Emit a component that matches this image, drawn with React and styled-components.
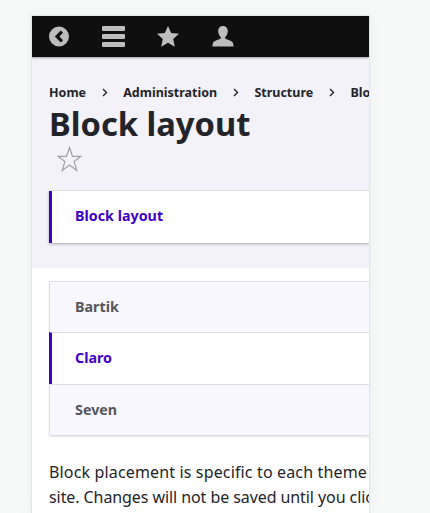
import React from 'react'
import styled, { createGlobalStyle } from 'styled-components'

const GlobalStyle = createGlobalStyle`
  html, body {
    margin: 0;
    height: 513px;
    overflow: hidden;
    background: #f8f9f9;
    font-family: "Noto Sans", "Open Sans", sans-serif;
  }
`

const Frame = styled.div`
  width: 337px;
  height: 497px;
  margin: 16px 0 0 32px;
  background: #fff;
  overflow: hidden;
  box-shadow: 0 0 1px 1px #e4e5e6, 0 0 16px rgba(0, 0, 0, 0.06);
`

const Toolbar = styled.div`
  height: 41px;
  display: flex;
  align-items: center;
  background: #0f0f0f;
  box-shadow: 0 1px 2px rgba(0, 0, 0, 0.35);
  position: relative;
  padding-left: 17px;
  gap: 32.5px;
`

const ToolIcon = styled.svg`
  width: ${p => p.$w}px;
  height: 21px;
  fill: #bdbdbd;
  flex: none;
`

const Header = styled.header`
  height: 211px;
  box-sizing: border-box;
  padding: 26px 0 0 17px;
  background: #f3f2f9;
`

const Crumbs = styled.nav`
  display: flex;
  align-items: center;
  height: 18px;
  white-space: nowrap;
  font-size: 12.5px;
  font-weight: 700;
  color: #232429;
`

const Chevron = styled.svg`
  width: 6px;
  height: 9px;
  margin: 0 15.6px;
  flex: none;
  fill: none;
  stroke: #232429;
  stroke-width: 1.4;
`

const Title = styled.h1`
  margin: 3px 0 0;
  font-size: 32.7px;
  line-height: 40px;
  font-weight: 700;
  color: #232429;
`

const FavStar = styled.svg`
  display: block;
  width: 25px;
  height: 26px;
  margin: 2px 0 0 8px;
  fill: none;
  stroke: #a0a0a8;
  stroke-width: 1.2;
`

const PrimaryTab = styled.div`
  margin-top: 19px;
  height: 52px;
  display: flex;
  align-items: center;
  box-sizing: border-box;
  padding: 0 0 3px 23px;
  background: #fff;
  border-left: 3px solid #3f00c8;
  box-shadow: 0 1px 3px rgba(0, 0, 0, 0.28), 0 0 1px rgba(0, 0, 0, 0.2);
  font-size: 14.3px;
  font-weight: 700;
  color: #3f00c8;
`

const Content = styled.main`
  padding: 13px 0 0 17px;
`

const TabList = styled.div`
  border: 1px solid #dedde5;
  border-right: none;
  border-radius: 2px 0 0 2px;
  box-shadow: 0 1px 2px rgba(0, 0, 0, 0.1);
`

const TabRow = styled.div`
  height: ${p => (p.$active ? '52px' : '51px')};
  display: flex;
  align-items: center;
  box-sizing: border-box;
  padding: 0 0 2px ${p => (p.$active ? '23px' : '25px')};
  font-size: 14.3px;
  font-weight: 700;
  background: ${p => (p.$active ? '#fff' : '#f9f8fe')};
  color: ${p => (p.$active ? '#3f00c8' : '#55565b')};
  border-left: ${p => (p.$active ? '3px solid #3f00c8' : 'none')};
  margin-left: ${p => (p.$active ? '-1px' : '0')};
  &:first-child {
    height: 50px;
  }
  & + & {
    border-top: 1px solid #dedde5;
  }
`

const Intro = styled.p`
  margin: 24px 0 0;
  width: 340px;
  font-size: 16px;
  line-height: 25px;
  color: #232429;
  white-space: nowrap;
`

const IntroLine = styled.span`
  display: block;
  letter-spacing: ${p => p.$tracking}px;
`

function App() {
  return (
    <>
      <GlobalStyle />
      <Frame>
        <Toolbar>
          <ToolIcon $w={20} viewBox="0 0 20 21">
            <path fillRule="evenodd" d="M10 .5a10 10 0 1 0 0 20a10 10 0 0 0 0-20zM11.800 4.500l2.300 2.300l-3.700 3.700l3.700 3.700l-2.300 2.300l-6-6z" />
          </ToolIcon>
          <ToolIcon $w={23} viewBox="0 0 23 21">
            <path d="M0 1a1 1 0 0 1 1-1h21a1 1 0 0 1 1 1v3a1 1 0 0 1-1 1H1a1 1 0 0 1-1-1zM0 9a1 1 0 0 1 1-1h21a1 1 0 0 1 1 1v3a1 1 0 0 1-1 1H1a1 1 0 0 1-1-1zM0 17a1 1 0 0 1 1-1h21a1 1 0 0 1 1 1v3a1 1 0 0 1-1 1H1a1 1 0 0 1-1-1z" />
          </ToolIcon>
          <ToolIcon $w={22} viewBox="0 0 22 21">
            <path d="M11 0l3.200 7l7.800.8l-5.800 5.200l1.600 7.700L11 16.800l-6.800 3.900l1.600-7.700L0 7.800L7.800 7z" />
          </ToolIcon>
          <ToolIcon $w={22} viewBox="0 0 22 21">
            <path d="M11 0c3 0 4.800 2.300 4.800 5c0 2.500-1.100 4.700-2.400 5.900c-.6.800-.2 1.800.8 2.200c2.600 1.200 6.400 2 6.900 4.300l.6 3.100H.3l.6-3.100c.5-2.300 4.300-3.100 6.900-4.300c1-.4 1.400-1.400.8-2.200C7.300 9.700 6.200 7.500 6.200 5C6.200 2.300 8 0 11 0z" />
          </ToolIcon>
        </Toolbar>
        <Header>
          <Crumbs>
            Home
            <Chevron viewBox="0 0 6 9"><path d="M1 1l3.500 3.500L1 8" /></Chevron>
            Administration
            <Chevron viewBox="0 0 6 9"><path d="M1 1l3.500 3.500L1 8" /></Chevron>
            Structure
            <Chevron viewBox="0 0 6 9"><path d="M1 1l3.500 3.500L1 8" /></Chevron>
            Block layout
          </Crumbs>
          <Title>Block layout</Title>
          <FavStar viewBox="0 0 25 26">
            <path d="M12.500 1.500l3 8.800h8.500l-6.900 5.300l2.600 8.900l-7.200-5.400l-7.200 5.400l2.600-8.900L1 10.300h8.500z" />
          </FavStar>
          <PrimaryTab>Block layout</PrimaryTab>
        </Header>
        <Content>
          <TabList>
            <TabRow>Bartik</TabRow>
            <TabRow $active>Claro</TabRow>
            <TabRow>Seven</TabRow>
          </TabList>
          <Intro>
            <IntroLine $tracking={0.15}>Block placement is specific to each theme on your</IntroLine>
            <IntroLine $tracking={-0.08}>site. Changes will not be saved until you click</IntroLine>
          </Intro>
        </Content>
      </Frame>
    </>
  )
}

export default App
